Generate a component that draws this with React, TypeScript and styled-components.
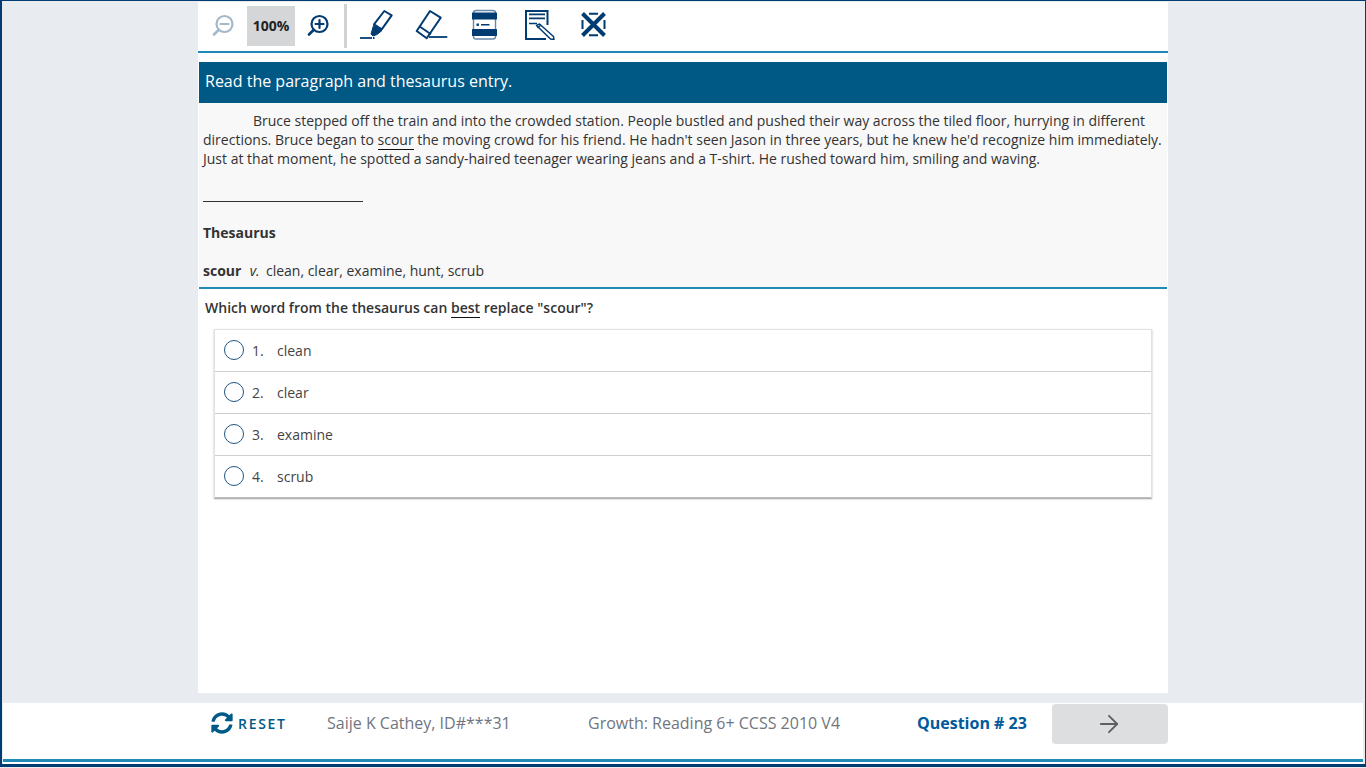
import React from "react";
import styled, { createGlobalStyle } from "styled-components";
import { ArrowRight } from "lucide-react";

const GlobalStyle = createGlobalStyle`
  html, body {
    margin: 0;
    padding: 0;
    height: 100%;
    overflow: hidden;
    background: #e8ebf0;
  }
  body {
    font-family: "Open Sans", "Noto Sans", sans-serif;
    color: #333;
  }
`;

const navy = "#003b71";

const Frame = styled.div`
  box-sizing: border-box;
  width: 1366px;
  height: 767px;
  padding: 0 2px 0 1px;
  background: #e8ebf0;
  border-top: 1px solid ${navy};
  border-left: 2px solid ${navy};
  border-right: 1px solid ${navy};
  border-bottom: 3px solid ${navy};
  display: flex;
  flex-direction: column;
  align-items: center;
`;

const Sheet = styled.main`
  width: 970px;
  height: 691px;
  margin-top: 1px;
  background: #fff;
  display: flex;
  flex-direction: column;
  flex: none;
`;

const Toolbar = styled.div`
  box-sizing: border-box;
  height: 51px;
  flex: none;
  display: flex;
  align-items: flex-start;
  border-bottom: 2px solid #1f8ab5;
`;

const ToolButton = styled.button<{ $width: number; $left?: number }>`
  width: ${(p) => p.$width}px;
  height: 44px;
  margin: 2px 0 0 ${(p) => p.$left ?? 0}px;
  padding: 0;
  border: 0;
  background: none;
  display: flex;
  align-items: center;
  justify-content: center;
  flex: none;
`;

const DrawTool = styled(ToolButton)`
  margin-top: 0;
`;

const ZoomLevel = styled.div`
  width: 48px;
  height: 40px;
  margin-top: 4px;
  background: #d5d6d8;
  font-size: 14px;
  font-weight: 700;
  color: #222;
  line-height: 40px;
  text-align: center;
  flex: none;
`;

const Divider = styled.div`
  width: 3px;
  height: 44px;
  margin: 2px 11px 0 3px;
  background: #d0d2d4;
  flex: none;
`;

const Stem = styled.h1`
  margin: 9px 1px 0;
  height: 41px;
  padding-left: 6px;
  background: #005885;
  color: #fff;
  font-size: 16px;
  font-weight: 400;
  line-height: 39px;
  flex: none;
`;

const Passage = styled.section`
  margin: 0 1px;
  height: 186px;
  padding: 8px 4px 0;
  box-sizing: border-box;
  background: #f8f8f8;
  border-bottom: 2px solid #1f8ab5;
  font-size: 14px;
  line-height: 19px;
  flex: none;
`;

const Paragraph = styled.p`
  margin: 0 -10px 0 0;
  text-indent: 50px;
  width: 962px;
`;

const Marked = styled.span`
  border-bottom: 1px solid #111;
`;

const Rule = styled.div`
  width: 160px;
  height: 1px;
  margin-top: 33px;
  background: #333;
`;

const EntryHeading = styled.div`
  margin-top: 21px;
  font-weight: 700;
`;

const Entry = styled.div`
  margin-top: 19px;
  white-space: pre;
`;

const PartOfSpeech = styled.i`
  margin: 0 -1px 0 1px;
`;

const Question = styled.div`
  margin: 9px 0 0 7px;
  font-size: 14px;
  font-weight: 600;
  line-height: 19px;
  color: #333;
`;

const Choices = styled.ul`
  list-style: none;
  margin: 12px 16px 0;
  padding: 0;
  border: 1px solid #e2e2e2;
  border-bottom: 0;
  box-shadow: 0 1px 1px rgba(0, 0, 0, 0.25), 0 1px 3px rgba(0, 0, 0, 0.12);
`;

const Choice = styled.li`
  box-sizing: border-box;
  height: 42px;
  display: flex;
  align-items: center;
  padding-left: 9px;
  font-size: 14px;
  color: #444;
  border-bottom: 1px solid #cfcfcf;

  &:last-child {
    border-bottom-color: #bdbdbd;
  }
`;

const Radio = styled.span`
  box-sizing: border-box;
  width: 20px;
  height: 20px;
  border: 1.5px solid #1f5582;
  border-radius: 50%;
  margin-top: -2px;
  flex: none;
`;

const ChoiceNumber = styled.span`
  width: 25px;
  margin-left: 8px;
`;

const Footer = styled.footer`
  align-self: stretch;
  height: 61px;
  margin-top: 10px;
  background: #fff;
  flex: none;
`;

const FooterBody = styled.div`
  box-sizing: border-box;
  height: 59px;
  border-bottom: 3px solid #1f8ab5;
  display: flex;
  justify-content: center;
`;

const FooterInner = styled.div`
  width: 970px;
  height: 40px;
  display: flex;
  align-items: center;
`;

const Reset = styled.div`
  display: flex;
  align-items: center;
  gap: 5px;
  margin-left: 13px;
  color: #005a87;
  font-size: 14px;
  font-weight: 600;
  letter-spacing: 1.7px;
  width: 116px;
  flex: none;
`;

const Info = styled.div<{ $width: number }>`
  width: ${(p) => p.$width}px;
  flex: none;
  font-size: 16px;
  color: #707580;
`;

const QuestionNumber = styled.div`
  width: 135px;
  flex: none;
  font-size: 16px;
  font-weight: 700;
  color: #005a9c;
`;

const NextButton = styled.button`
  width: 116px;
  height: 40px;
  margin-top: 2px;
  padding: 0 2px 0 0;
  border: 0;
  border-radius: 4px;
  background: #dddee0;
  color: #5f6062;
  display: flex;
  align-items: center;
  justify-content: center;
  flex: none;
`;

const ZoomIcon = ({ plus, color }: { plus: boolean; color: string }) => (
  <svg width="24" height="24" viewBox="0 0 24 24" fill="none" stroke={color} strokeWidth="2.200" strokeLinecap="round">
    <circle cx="13.5" cy="10" r="8" />
    <path d="M7.800 15.800L3 20.500" strokeWidth="2.600" />
    <path d="M9.500 10h8" />
    {plus && <path d="M13.500 6v8" />}
  </svg>
);

const HighlighterIcon = () => (
  <svg width="36" height="32" viewBox="0 0 36 32" fill="none" stroke={navy}>
    <path d="M26.300 3L33.700 7.300 23.700 21.300 16 16.300z" strokeWidth="2" strokeLinejoin="round" />
    <path d="M15.500 17.500L24 22.500 19 26.500 15 28 13 26z" fill={navy} strokeWidth="1" strokeLinejoin="round" />
    <path d="M2 30h12" strokeWidth="1.800" />
    <path d="M15 30h1.500" strokeWidth="1.800" />
  </svg>
);

const EraserIcon = () => (
  <svg width="34" height="32" viewBox="0 0 34 32" fill="none" stroke={navy} strokeWidth="2" strokeLinejoin="round">
    <path d="M15 3L25.700 9.700 11.700 30.300 1.700 23z" />
    <path d="M5 18.700L16 26.300" />
    <path d="M14 29h18.300" strokeWidth="1.800" />
  </svg>
);

const NotepadIcon = () => (
  <svg width="27" height="32" viewBox="0 0 27 32">
    <rect x="2.500" y="2.500" width="22" height="28.500" rx="2.500" fill="#fff" stroke={navy} strokeOpacity="0.6" strokeWidth="1.400" />
    <rect x="1" y="4.500" width="25" height="7" rx="0.500" fill={navy} />
    <rect x="1" y="21" width="25" height="7" rx="0.500" fill={navy} />
    <rect x="5.500" y="15.500" width="2.400" height="2.400" fill={navy} />
    <rect x="10" y="16" width="8.500" height="1.500" fill={navy} />
  </svg>
);

const NotesIcon = () => (
  <svg width="32" height="32" viewBox="0 0 32 32" fill="none" stroke={navy}>
    <path d="M23.500 17V3H2v28h20" strokeWidth="2" />
    <path d="M5 6.300h16M5 10.400h16M5 15.500h8" strokeWidth="1.700" />
    <path d="M12.500 17.500L15.500 16 29.500 28.500 30 31.500 26.500 31z" fill="#fff" strokeWidth="1.500" strokeLinejoin="round" />
    <path d="M13.500 20L17 17" strokeWidth="1.400" />
  </svg>
);

const EliminateIcon = () => (
  <svg width="25" height="26" viewBox="0 0 25 26" fill="none" stroke={navy}>
    <path d="M1.500 9V18M23.500 9V18M8 2.800h9M8 24.200h9" strokeWidth="2" />
    <path d="M1.500 2.500L23.500 24.500M23.500 2.500L1.500 24.500" strokeWidth="4" />
  </svg>
);

const ResetIcon = () => (
  <svg width="22" height="22" viewBox="0 0 512 512" fill="#005a87">
    <path d="M370.720 133.280C339.458 104.008 298.888 87.962 255.848 88c-77.458.068-144.328 53.178-162.791 126.850-1.344 5.363-6.122 9.150-11.651 9.150H24.103c-7.498 0-13.194-6.807-11.807-14.176C33.933 94.924 134.813 8 256 8c66.448 0 126.791 26.136 171.315 68.685L463.030 40.970C478.149 25.851 504 36.559 504 57.941V192c0 13.255-10.745 24-24 24H345.941c-21.382 0-32.090-25.851-16.971-40.971l41.750-41.749zM32 296h134.059c21.382 0 32.090 25.851 16.971 40.971l-41.750 41.750c31.262 29.273 71.835 45.319 114.876 45.280 77.418-.070 144.315-53.144 162.787-126.849 1.344-5.363 6.122-9.150 11.651-9.150h57.304c7.498 0 13.194 6.807 11.807 14.176C478.067 417.076 377.187 504 256 504c-66.448 0-126.791-26.136-171.315-68.685L48.970 471.030C33.851 486.149 8 475.441 8 454.059V320c0-13.255 10.745-24 24-24z" />
  </svg>
);

const choices = ["clean", "clear", "examine", "scrub"];

export default function App() {
  return (
    <>
      <GlobalStyle />
      <Frame>
        <Sheet>
          <Toolbar>
            <ToolButton $width={49}>
              <ZoomIcon plus={false} color="#a3b8c9" />
            </ToolButton>
            <ZoomLevel>100%</ZoomLevel>
            <ToolButton $width={46}>
              <ZoomIcon plus color={navy} />
            </ToolButton>
            <Divider />
            <DrawTool $width={36}>
              <HighlighterIcon />
            </DrawTool>
            <DrawTool $width={34} $left={21}>
              <EraserIcon />
            </DrawTool>
            <DrawTool $width={27} $left={22}>
              <NotepadIcon />
            </DrawTool>
            <DrawTool $width={32} $left={26}>
              <NotesIcon />
            </DrawTool>
            <DrawTool $width={25} $left={25}>
              <EliminateIcon />
            </DrawTool>
          </Toolbar>
          <Stem>Read the paragraph and thesaurus entry.</Stem>
          <Passage>
            <Paragraph>
              Bruce stepped off the train and into the crowded station. People bustled and pushed their way across the tiled floor, hurrying in different directions. Bruce began to <Marked>scour</Marked> the moving crowd for his friend. He hadn't seen Jason in three years, but he knew he'd recognize him immediately. Just at that moment, he spotted a sandy-haired teenager wearing jeans and a T-shirt. He rushed toward him, smiling and waving.
            </Paragraph>
            <Rule />
            <EntryHeading>Thesaurus</EntryHeading>
            <Entry>
              <b>scour</b>{"  "}<PartOfSpeech>v.</PartOfSpeech>{"  "}clean, clear, examine, hunt, scrub
            </Entry>
          </Passage>
          <Question>
            Which word from the thesaurus can <Marked>best</Marked> replace "scour"?
          </Question>
          <Choices>
            {choices.map((choice, i) => (
              <Choice key={choice}>
                <Radio />
                <ChoiceNumber>{i + 1}.</ChoiceNumber>
                {choice}
              </Choice>
            ))}
          </Choices>
        </Sheet>
        <Footer>
          <FooterBody>
            <FooterInner>
              <Reset>
                <ResetIcon />
                <span>RESET</span>
              </Reset>
              <Info $width={261}>Saije K Cathey, ID#***31</Info>
              <Info $width={329}>Growth: Reading 6+ CCSS 2010 V4</Info>
              <QuestionNumber>Question # 23</QuestionNumber>
              <NextButton>
                <ArrowRight size={28} strokeWidth={1.6} />
              </NextButton>
            </FooterInner>
          </FooterBody>
        </Footer>
      </Frame>
    </>
  );
}
